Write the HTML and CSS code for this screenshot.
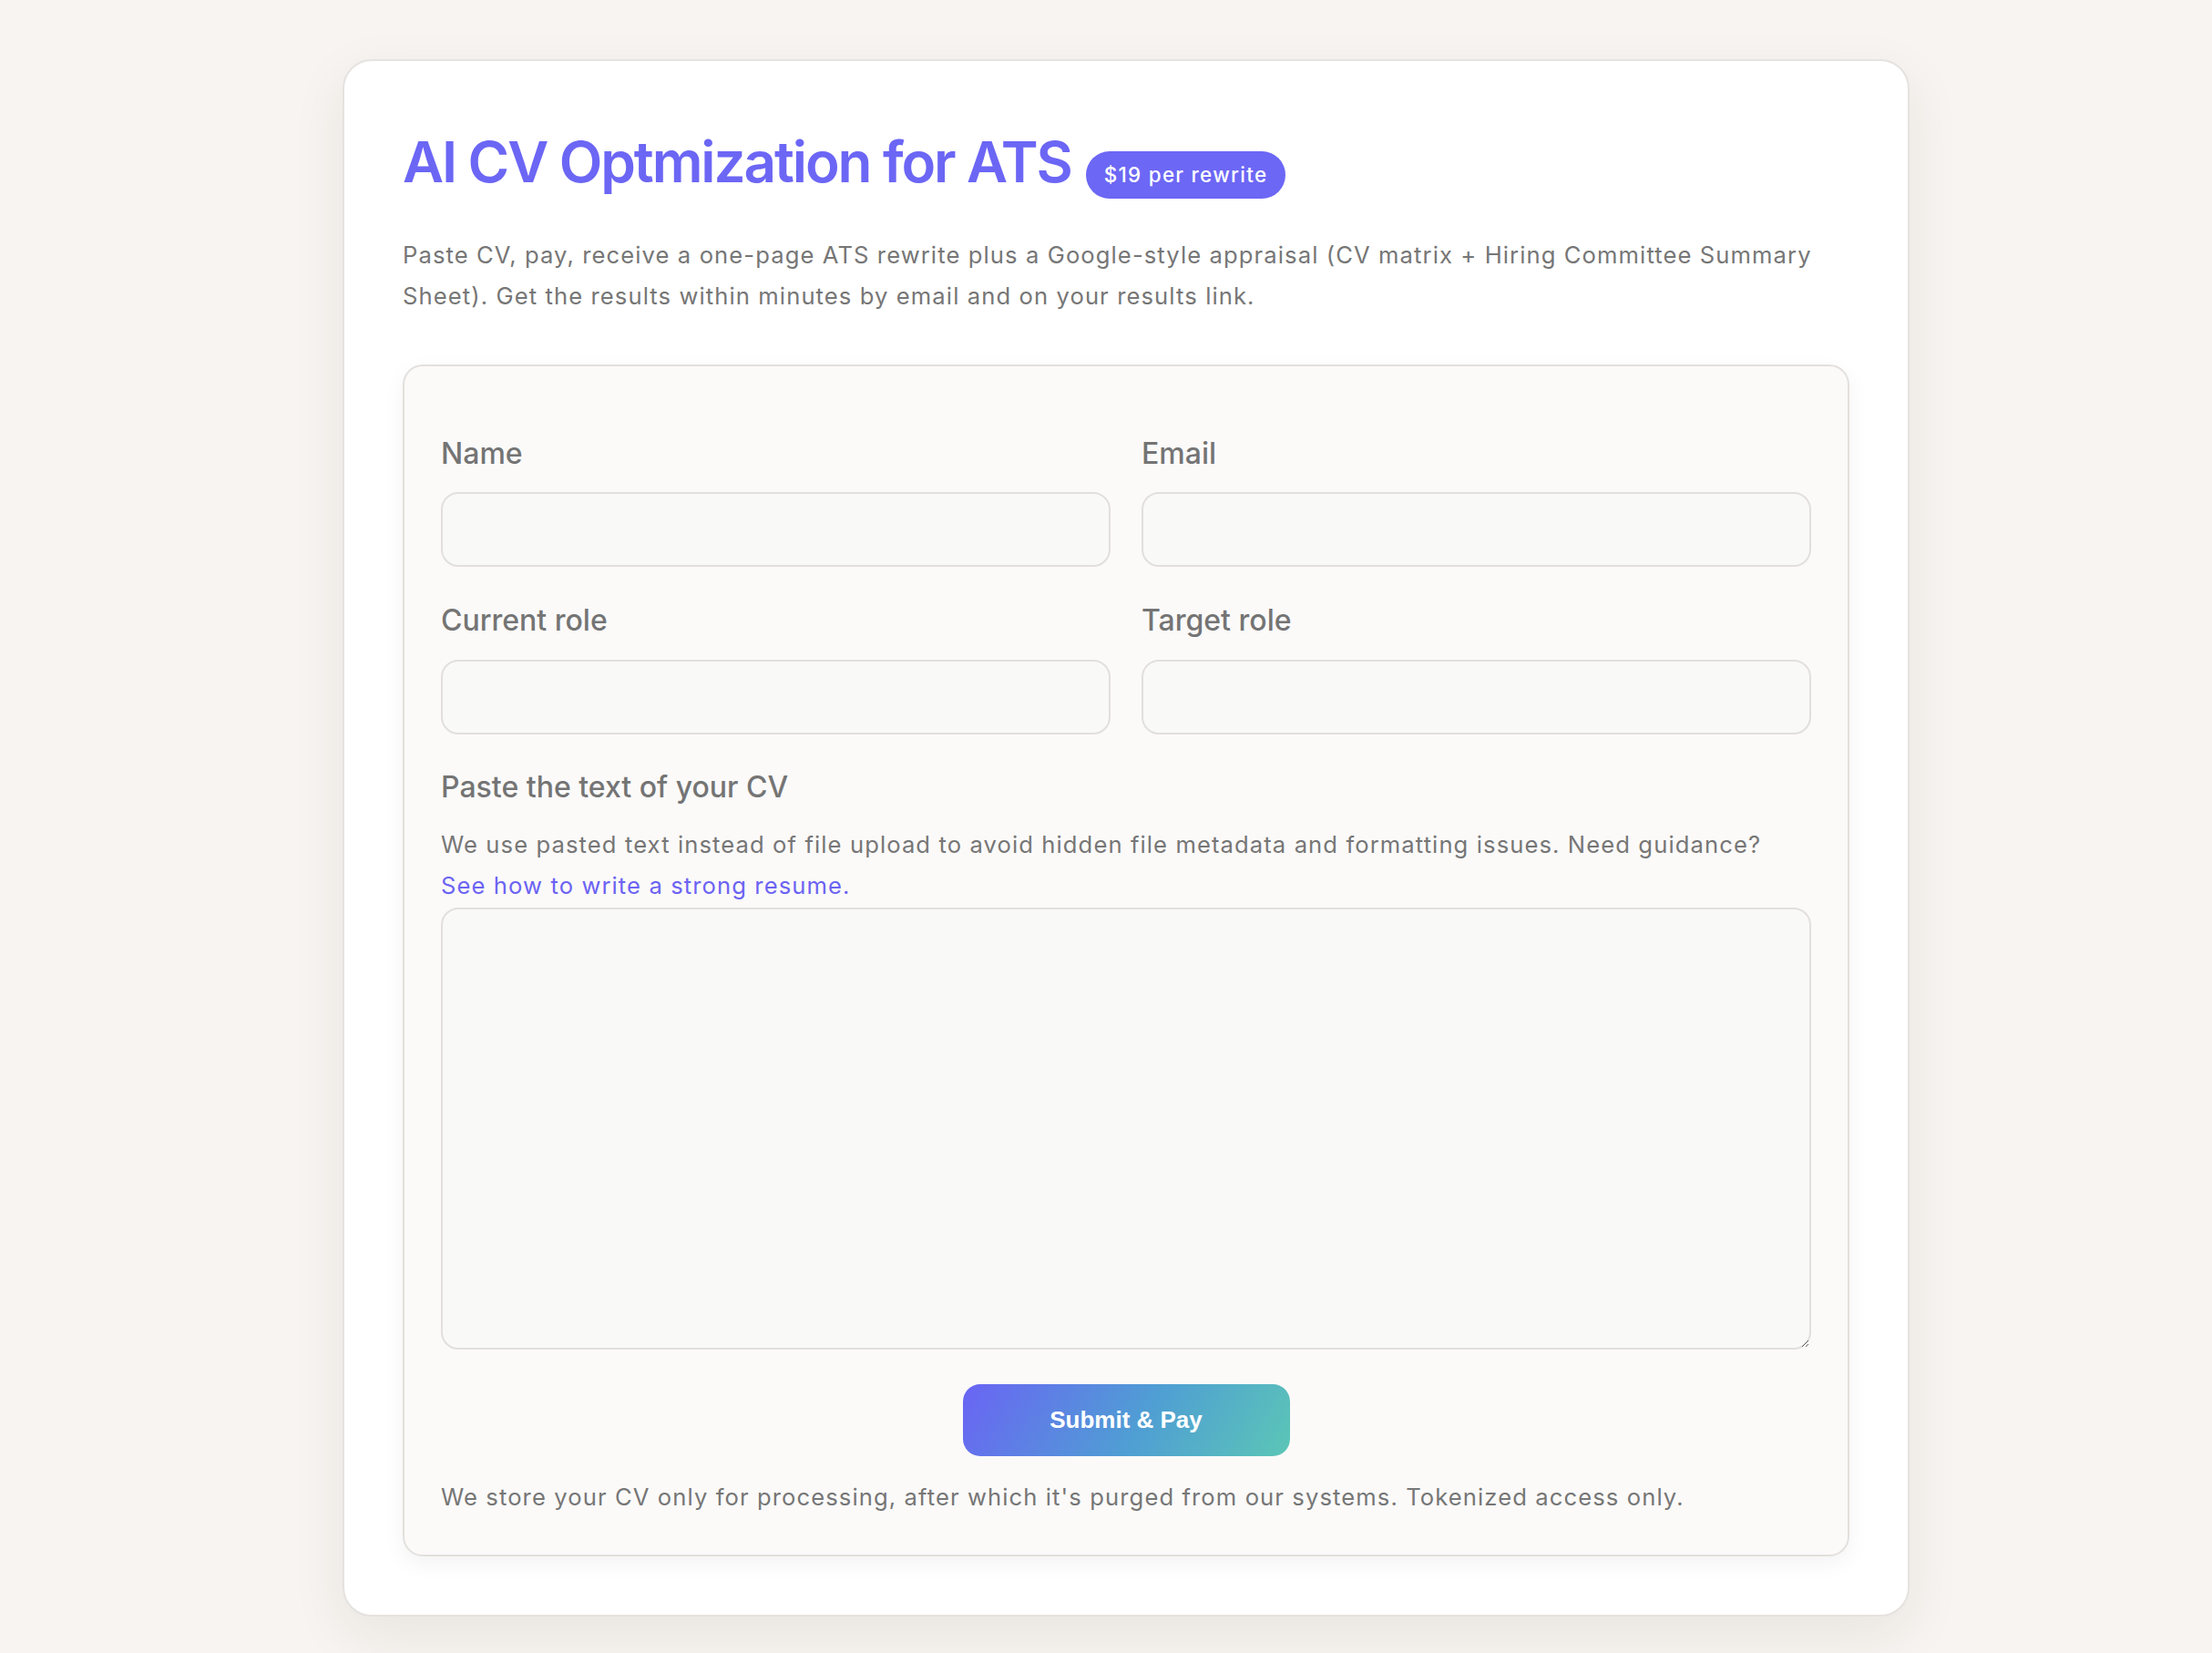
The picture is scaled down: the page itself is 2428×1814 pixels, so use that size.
FILE: index.html
```html
<!DOCTYPE html>
<html lang="en">

<head>
    <meta charset="UTF-8">
    <meta name="viewport" content="width=device-width, initial-scale=1.0">
    <title>AI CV Optmization for ATS</title>
    <link rel="stylesheet" href="styles.css">
</head>

<body>
    <div id="page">
        <div id="card">
            <div class="header">
                <h1>AI CV Optmization for ATS</h1>
                <span class="badge">$19 per rewrite</span>
            </div>
            <p class="intro">Paste CV, pay, receive a one-page ATS rewrite plus a Google-style appraisal (CV matrix + Hiring Committee Summary Sheet). Get the results within minutes by email and on your results link.</p>

            <form id="cvForm">
                <div class="grid">
                    <div class="field">
                        <label for="name">Name</label>
                        <input type="text" id="name">
                    </div>
                    <div class="field">
                        <label for="email">Email</label>
                        <input type="email" id="email">
                    </div>
                    <div class="field">
                        <label for="current">Current role</label>
                        <input type="text" id="current">
                    </div>
                    <div class="field">
                        <label for="target">Target role</label>
                        <input type="text" id="target">
                    </div>
                </div>

                <label for="cv" class="cv-label">Paste the text of your CV</label>
                <p class="hint">We use pasted text instead of file upload to avoid hidden file metadata and formatting issues. Need guidance? <a href="#">See how to write a strong resume.</a></p>
                <textarea id="cv"></textarea>

                <div class="actions">
                    <button type="submit" class="pay">Submit &amp; Pay</button>
                </div>
                <p class="note">We store your CV only for processing, after which it's purged from our systems. Tokenized access only.</p>
            </form>
        </div>
    </div>
</body>

</html>
```

FILE: styles.css
```css
* {
    box-sizing: border-box;
}

body {
    margin: 0;
    background-color: #f7f4f1;
    font-family: "Inter", "Noto Sans", sans-serif;
    color: #747474;
}

#page {
    display: flex;
    justify-content: center;
    padding: 65px 0 42px 44px;
}

#card {
    width: 1720px;
    background-color: #fff;
    border: 2px solid #e5e2df;
    border-radius: 32px;
    padding: 64px;
    box-shadow: 0 20px 60px rgba(70, 50, 30, 0.08);
}

.header {
    display: flex;
    align-items: baseline;
    gap: 16px;
    margin-top: 10px;
}

.header h1 {
    margin: 0;
    font-size: 62px;
    line-height: 1.2;
    font-weight: 600;
    color: #6c66f5;
    letter-spacing: -2.1px;
}

.badge {
    background-color: #6c67f5;
    color: #fff;
    font-size: 22.4px;
    font-weight: 500;
    line-height: 32px;
    letter-spacing: 1.3px;
    padding: 10px 20px;
    border-radius: 999px;
}

.intro {
    margin: 39px 0 53px;
    font-size: 25.6px;
    line-height: 45px;
    letter-spacing: 1.1px;
    color: #767676;
}

#cvForm {
    background-color: #fbfaf9;
    border: 2px solid #e3e0dd;
    border-radius: 22px;
    padding: 77px 40px 40px;
    box-shadow: 0 8px 24px rgba(0, 0, 0, 0.05);
}

.grid {
    display: grid;
    grid-template-columns: 1fr 1fr;
    column-gap: 34px;
    row-gap: 40px;
}

.field {
    display: flex;
    flex-direction: column;
}

label {
    display: block;
    font-size: 32px;
    line-height: 1.2;
    font-weight: 500;
    color: #747474;
    margin-bottom: 23px;
}

input,
textarea {
    width: 100%;
    background-color: #f9f9f8;
    border: 2px solid #e2dfdc;
    border-radius: 19px;
    font-family: inherit;
    font-size: 25.6px;
    padding: 0 20px;
    outline: none;
}

input {
    height: 82px;
}

.cv-label {
    margin: 39px 0 22px;
}

.hint {
    margin: 0 0 1px;
    font-size: 25.6px;
    line-height: 44.8px;
    letter-spacing: 1.1px;
    color: #767676;
}

.hint a {
    display: inline-block;
    color: #6c63f3;
    text-decoration: none;
}

textarea {
    display: block;
    height: 485px;
    padding: 20px;
    resize: vertical;
}

.actions {
    display: flex;
    justify-content: center;
    margin-top: 38px;
}

.pay {
    width: 359px;
    height: 79px;
    border: none;
    border-radius: 19px;
    background: linear-gradient(120deg, #6a64f4 0%, #4f9fd3 55%, #5cc6b6 100%);
    color: #fff;
    font-family: "Liberation Sans", Arial, sans-serif;
    font-weight: bold;
    font-size: 26px;
    cursor: pointer;
}

.note {
    margin: 23px 0 0;
    font-size: 25.6px;
    line-height: 44.8px;
    letter-spacing: 1.1px;
    color: #767676;
}
```
